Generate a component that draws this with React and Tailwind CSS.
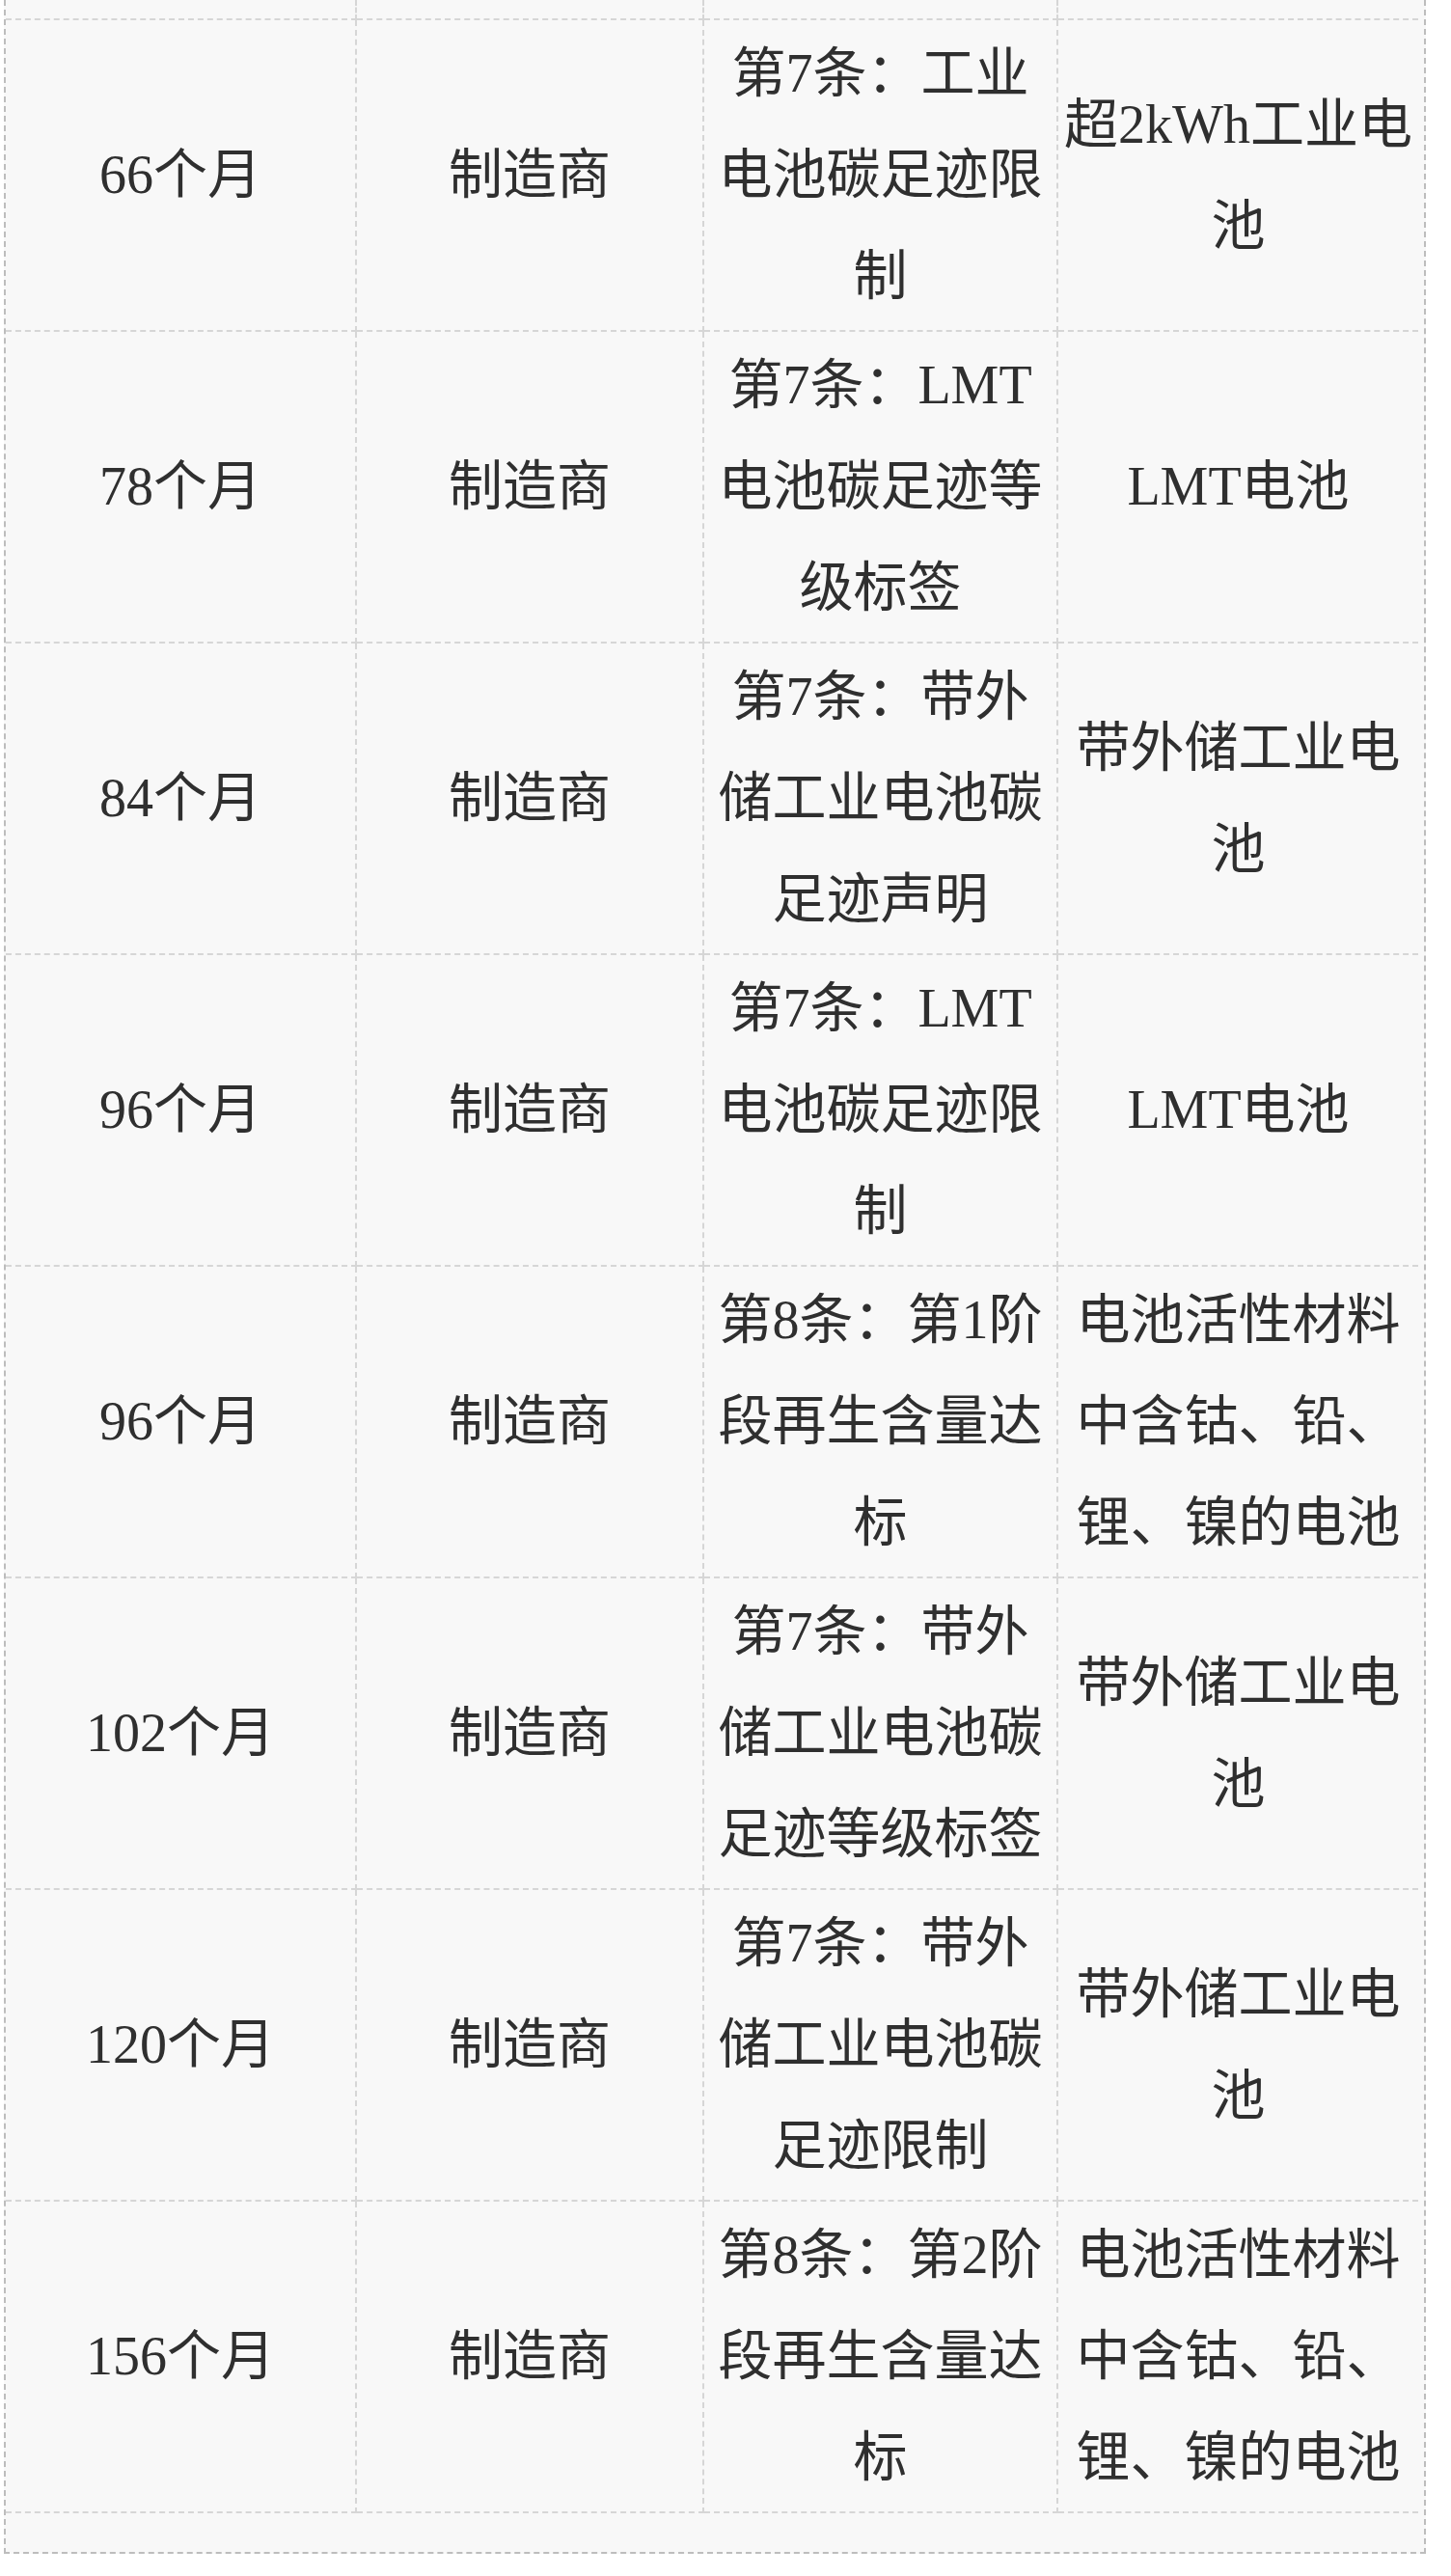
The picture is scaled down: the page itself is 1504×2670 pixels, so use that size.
import React from "react";

const rows = [
  ["66个月", "制造商", "第7条：工业电池碳足迹限制", "超2kWh工业电池"],
  ["78个月", "制造商", "第7条：LMT电池碳足迹等级标签", "LMT电池"],
  ["84个月", "制造商", "第7条：带外储工业电池碳足迹声明", "带外储工业电池"],
  ["96个月", "制造商", "第7条：LMT电池碳足迹限制", "LMT电池"],
  ["96个月", "制造商", "第8条：第1阶段再生含量达标", "电池活性材料中含钴、铅、锂、镍的电池"],
  ["102个月", "制造商", "第7条：带外储工业电池碳足迹等级标签", "带外储工业电池"],
  ["120个月", "制造商", "第7条：带外储工业电池碳足迹限制", "带外储工业电池"],
  ["156个月", "制造商", "第8条：第2阶段再生含量达标", "电池活性材料中含钴、铅、锂、镍的电池"],
];

const cellBase =
  "flex items-center justify-center text-center border-b-2 border-dashed border-[#d6d6d6]";

export default function App() {
  return (
    <div
      className="w-[1504px] h-[2670px] bg-white text-[#2f2f2f]"
      style={{ fontFamily: '"Liberation Serif", "Noto Sans CJK SC", serif' }}
    >
      <div className="ml-[4px] w-[1474px] border-x-2 border-b-2 border-dashed border-[#bdbdbd] bg-[#f8f8f8] pb-[40px]">
        <div className="w-[1464px]">
          <div className="grid grid-cols-[364px_360px_367px_373px] h-[21px]">
            <div className="border-r-2 border-b-2 border-dashed border-[#d6d6d6]" />
            <div className="border-r-2 border-b-2 border-dashed border-[#d6d6d6]" />
            <div className="border-r-2 border-b-2 border-dashed border-[#d6d6d6]" />
            <div className="border-b-2 border-dashed border-[#d6d6d6]" />
          </div>
          {rows.map((r, i) => (
            <div
              key={i}
              className="grid grid-cols-[364px_360px_367px_373px] h-[323px] text-[56px] leading-[105px]"
            >
              <div className={cellBase + " border-r-2 px-[10px]"}>{r[0]}</div>
              <div className={cellBase + " border-r-2 px-[10px]"}>{r[1]}</div>
              <div className={cellBase + " border-r-2 px-[9px]"}>{r[2]}</div>
              <div className={cellBase + " px-[4px]"}>{r[3]}</div>
            </div>
          ))}
        </div>
      </div>
    </div>
  );
}
